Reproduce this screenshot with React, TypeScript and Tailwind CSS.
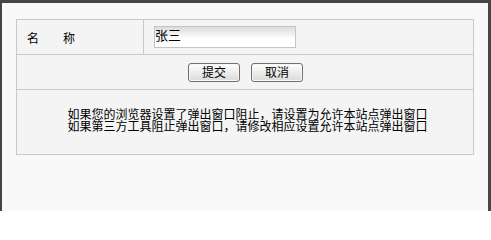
export default function App() {
  return (
    <div className="w-[491px] h-[211px] bg-[#454545] pt-[3px] pl-[2px] pr-[3px] overflow-hidden">
      <div className="h-full bg-[#f9f9f9] pl-[14px] pt-[16px] font-['Noto_Sans_CJK_SC',sans-serif] text-[12px] text-black">
        {/* Form table */}
        <div className="w-[458px] border border-[#c9c9c9] bg-[#f4f4f4]">
          <div className="flex h-[35px] border-b border-[#c9c9c9]">
            <div className="w-[127px] border-r border-[#c9c9c9] flex items-center pl-[10px] leading-[13px]">
              名　　称
            </div>
            <div className="flex-1 flex items-center pl-[10px]">
              <div className="w-[142px] h-[22px] border border-[#c4c4c4] bg-linear-to-b from-[#dcdcdc] to-white to-60% text-[13px] leading-[14px] pt-[1px]">
                张三
              </div>
            </div>
          </div>
          <div className="flex h-[35px] border-b border-[#c9c9c9] items-center justify-center gap-[11px] pl-[1px]">
            <button className="w-[52px] h-[19px] rounded-[3px] border border-[#707070] bg-linear-to-b from-white to-[#dadada] text-[12px] leading-[12px] shadow-[inset_0_0_0_1px_#f6f6f6]">
              提交
            </button>
            <button className="w-[52px] h-[19px] rounded-[3px] border border-[#707070] bg-linear-to-b from-white to-[#dadada] text-[12px] leading-[12px] shadow-[inset_0_0_0_1px_#f6f6f6]">
              取消
            </button>
          </div>
          <div className="h-[64px] pt-[18px] text-center leading-[12px] pl-[5px]">
            <p>如果您的浏览器设置了弹出窗口阻止，请设置为允许本站点弹出窗口</p>
            <p>如果第三方工具阻止弹出窗口，请修改相应设置允许本站点弹出窗口</p>
          </div>
        </div>
      </div>
    </div>
  )
}
